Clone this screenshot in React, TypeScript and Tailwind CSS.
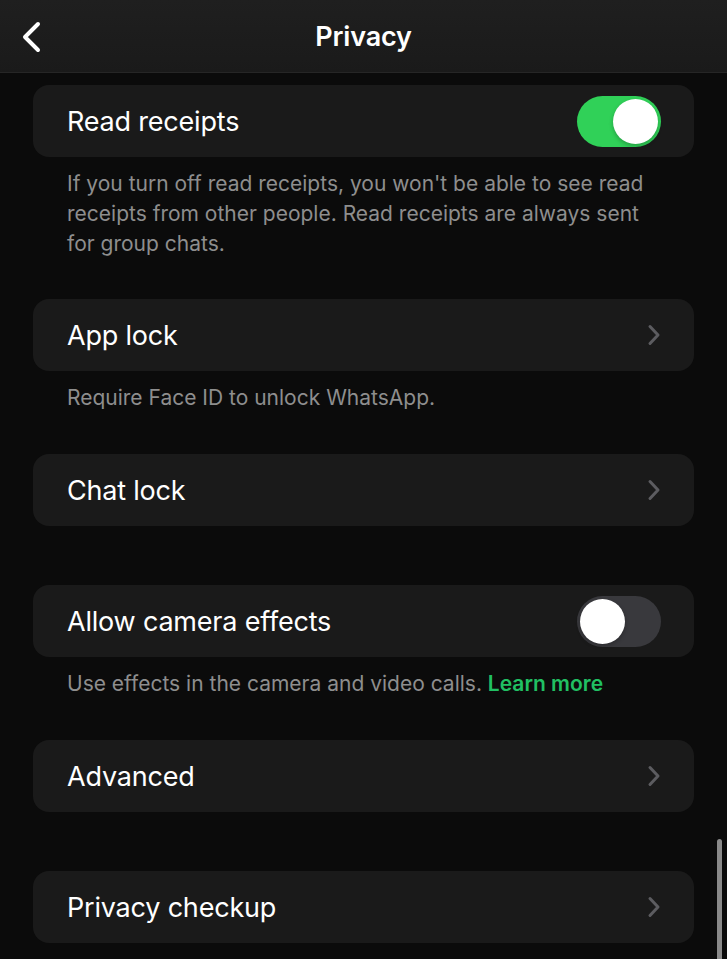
import React from "react";

const font = { fontFamily: "Inter, 'Noto Sans', sans-serif" };

const Toggle: React.FC<{ on: boolean }> = ({ on }) => (
  <div
    className={`flex h-[51px] w-[84px] shrink-0 items-center rounded-full p-[3px] ${
      on ? "justify-end bg-[#30d158]" : "justify-start bg-[#39393d]"
    }`}
  >
    <div className="h-[45px] w-[45px] rounded-full bg-white shadow-[0_2px_4px_rgba(0,0,0,0.25)]" />
  </div>
);

const Chevron = () => (
  <svg width="14" height="22" viewBox="0 0 14 22" fill="none" className="shrink-0">
    <path d="M3 2.5l8 8.5-8 8.5" stroke="#5c5c60" strokeWidth="3" strokeLinecap="round" strokeLinejoin="round" />
  </svg>
);

interface Row {
  label: string;
  toggle?: boolean;
  footer?: React.ReactNode;
  space: string;
}

const rows: Row[] = [
  {
    label: "Read receipts",
    toggle: true,
    footer:
      "If you turn off read receipts, you won't be able to see read receipts from other people. Read receipts are always sent for group chats.",
    space: "mb-[40px]",
  },
  { label: "App lock", footer: "Require Face ID to unlock WhatsApp.", space: "mb-[41px]" },
  { label: "Chat lock", space: "mb-[59px]" },
  {
    label: "Allow camera effects",
    toggle: false,
    footer: (
      <>
        Use effects in the camera and video calls.{" "}
        <span className="font-semibold text-[#21c063]">Learn more</span>
      </>
    ),
    space: "mb-[41px]",
  },
  { label: "Advanced", space: "mb-[59px]" },
  { label: "Privacy checkup", space: "mb-[59px]" },
];

export default function App() {
  return (
    <div className="relative h-[959px] w-[727px] overflow-hidden bg-[#0b0b0b] text-white" style={font}>
      <div className="relative flex h-[73px] items-center justify-center border-b border-[#262626] bg-gradient-to-b from-[#1f1f1f] to-[#1a1a1a]">
        <svg width="24" height="36" viewBox="0 0 24 36" fill="none" className="absolute left-[19px] top-[19px]">
          <path d="M19 5L6 18l13 13" stroke="white" strokeWidth="4" strokeLinecap="round" strokeLinejoin="round" />
        </svg>
        <h1 className="pt-[2px] text-[27px] font-semibold tracking-[-0.2px]">Privacy</h1>
      </div>

      <div className="px-[33px] pt-[12px]">
        {rows.map((row) => (
          <div key={row.label} className={row.space}>
            <div className="flex h-[72px] items-center justify-between rounded-[16px] bg-[#1a1a1a] pl-[34px] pr-[33px]">
              <span className="pt-[2px] text-[27px] tracking-[-0.2px]">{row.label}</span>
              {row.toggle === undefined ? <Chevron /> : <Toggle on={row.toggle} />}
            </div>
            {row.footer && (
              <p className="pl-[34px] pr-[37px] pt-[12px] text-[21px] leading-[30px] text-[#8e8e8e]">
                {row.footer}
              </p>
            )}
          </div>
        ))}
      </div>

      <div className="absolute right-[5px] top-[839px] h-[130px] w-[5px] rounded-full bg-[#8a8a8a]" />
    </div>
  );
}
